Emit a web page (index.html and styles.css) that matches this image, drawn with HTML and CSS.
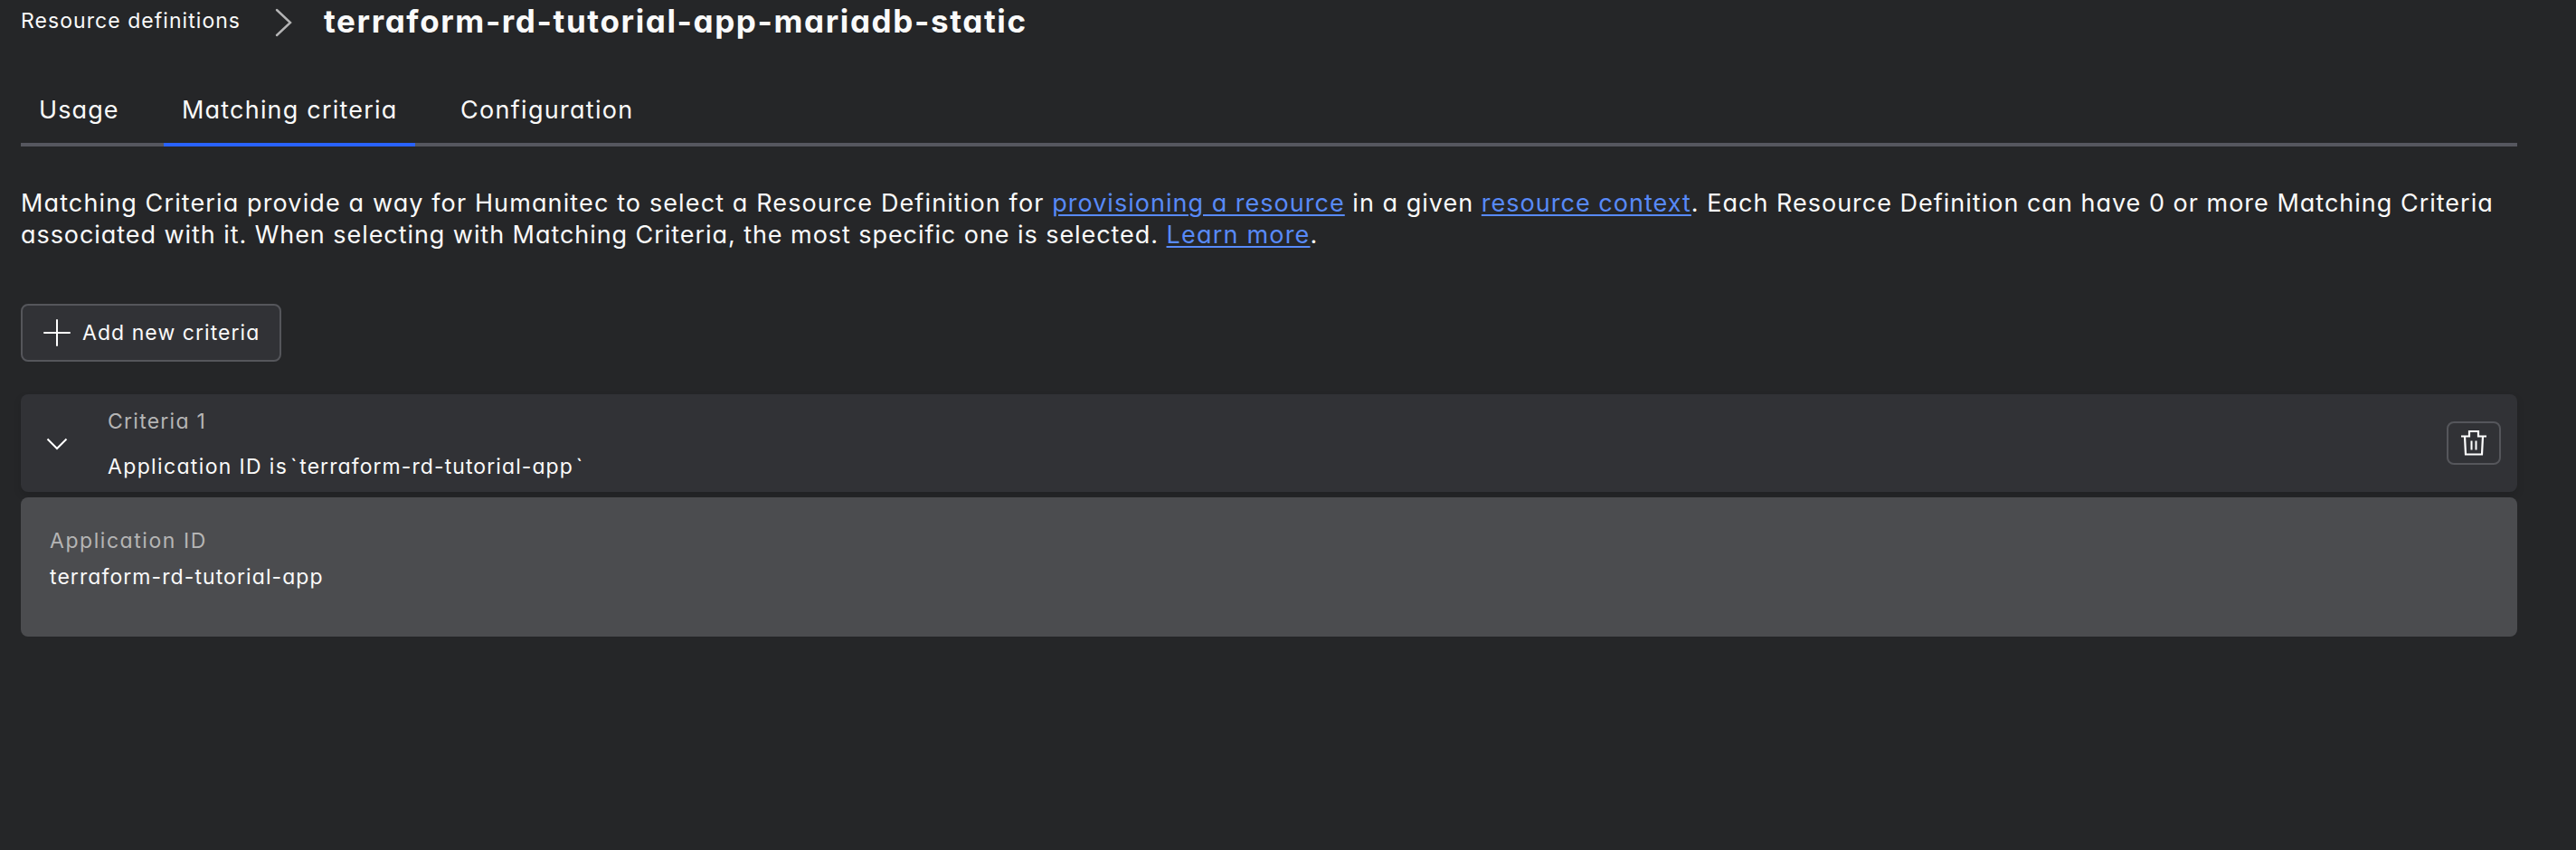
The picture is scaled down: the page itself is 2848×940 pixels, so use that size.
FILE: index.html
```
<!DOCTYPE html>
<html lang="en">
<head>
<meta charset="utf-8">
<title>terraform-rd-tutorial-app-mariadb-static</title>
<link rel="stylesheet" href="styles.css">
</head>
<body>
<main class="page">
  <header class="breadcrumb">
    <a class="crumb">Resource definitions</a>
    <svg class="crumb-sep" viewBox="0 0 20 32" fill="none"><path d="M2 2 17 16 2 30"/></svg>
    <h1 class="title">terraform-rd-tutorial-app-mariadb-static</h1>
  </header>

  <nav class="tabs">
    <a class="tab tab-usage">Usage</a>
    <a class="tab tab-active">Matching criteria</a>
    <a class="tab tab-config">Configuration</a>
  </nav>

  <p class="intro"><span class="lead">Matching Criteria provide a way for Humanitec to select a Resource Definition for </span><a class="link">provisioning a resource</a> in a given <a class="link">resource context</a><span class="tail">. Each Resource Definition can have 0 or more Matching Criteria</span><br><span class="follow">associated with it. When selecting with Matching Criteria, the most specific one is selected. </span><a class="link link-more">Learn more</a>.</p>

  <button class="add-button">
    <svg class="plus" viewBox="0 0 30 30" fill="none"><path d="M15 1v28M1 15h28"/></svg>
    <span>Add new criteria</span>
  </button>

  <section class="criteria">
    <svg class="chevron" viewBox="0 0 24 14" fill="none"><path d="m1.5 1.5 10.5 10.5 10.5-10.5"/></svg>
    <div class="criteria-text">
      <div class="muted">Criteria 1</div>
      <div><span class="summary">Application ID is</span><span class="tick">`</span><span class="value">terraform-rd-tutorial-app</span><span class="tick">`</span></div>
    </div>
    <button class="delete-button" aria-label="Delete">
      <svg class="trash" viewBox="0 0 28 28" fill="none"><path d="M0 6.5h9V1h10v5.500h9M4 6.500 5 26.500h18l1-20"/><path class="trash-bars" d="M11.500 11.500v10M16.500 11.500v10"/></svg>
    </button>
  </section>

  <section class="detail">
    <div class="muted label">Application ID</div>
    <div class="value">terraform-rd-tutorial-app</div>
  </section>
</main>
</body>
</html>
```
FILE: styles.css
```
* { box-sizing: border-box; }
body {
  margin: 0;
  background: #252628;
  color: #fafafa;
  font-family: Inter, "Liberation Sans", sans-serif;
  font-size: 23px;
  font-feature-settings: "cv11";
}
button { font: inherit; font-feature-settings: inherit; color: inherit; padding: 0; }
.page { width: 2783px; padding-left: 23px; }
.breadcrumb { display: flex; align-items: center; height: 46px; }
.crumb { width: 281px; letter-spacing: 1.05px; }
.crumb-sep { width: 20px; height: 32px; margin: 3px 34px 0 0; stroke: #b4b4b5; stroke-width: 2.4; stroke-linecap: round; }
.title { margin: 0; font-size: 35px; font-weight: 700; letter-spacing: 1.61px; }
.tabs { display: flex; gap: 30px; height: 78px; margin-top: 38px; box-shadow: inset 0 -4px #56575f; }
.tab { display: flex; align-items: center; padding: 0 0 4px 20px; font-size: 27px; letter-spacing: 1.1px; }
.tab-usage { width: 128px; }
.tab-active { width: 278px; letter-spacing: 1.2px; box-shadow: inset 0 -4px #2962ff; }
.tab-config { letter-spacing: 1.3px; }
.intro { margin: 45px 0 59px; font-size: 27px; line-height: 35px; letter-spacing: 1.02px; white-space: nowrap; }
.lead { letter-spacing: 1.12px; }
.tail { letter-spacing: 1px; }
.follow { letter-spacing: .94px; }
.link { color: #588af8; text-decoration: underline; text-decoration-thickness: 2px; text-underline-offset: 3px; }
.link-more { letter-spacing: 1.2px; }
.add-button { display: flex; align-items: center; gap: 13px; width: 288px; height: 64px; padding-left: 23px; border: 2px solid #55565b; border-radius: 8px; background: #313236; letter-spacing: 1.05px; white-space: nowrap; }
.plus { width: 30px; height: 30px; stroke: #fff; stroke-width: 2; stroke-linecap: round; }
.criteria { display: flex; align-items: center; height: 108px; margin-top: 36px; padding: 0 18px 0 28px; border-radius: 8px; background: #313236; box-shadow: 0 4px 8px rgba(0, 0, 0, .12); }
.chevron { width: 24px; height: 14px; margin-top: 2px; stroke: #fff; stroke-width: 2; }
.criteria-text { flex: 1; margin-left: 44px; padding-top: 1px; line-height: 50px; letter-spacing: 1.25px; }
.summary { letter-spacing: 1.35px; }
.label { letter-spacing: 1.55px; }
.value { letter-spacing: 1.08px; }
.tick { display: inline-block; width: 13px; text-align: center; letter-spacing: 0; }
.muted { color: #b5b5b5; }
.delete-button { display: grid; place-items: center; width: 60px; height: 48px; border: 2px solid #55565b; border-radius: 8px; background: none; }
.trash { width: 28px; height: 28px; stroke: #fff; stroke-width: 2.2; }
.trash-bars { stroke-width: 2; }
.detail { height: 154px; margin-top: 6px; padding: 28px 32px; border-radius: 8px; background: #4b4c4f; line-height: 40px; }
```
